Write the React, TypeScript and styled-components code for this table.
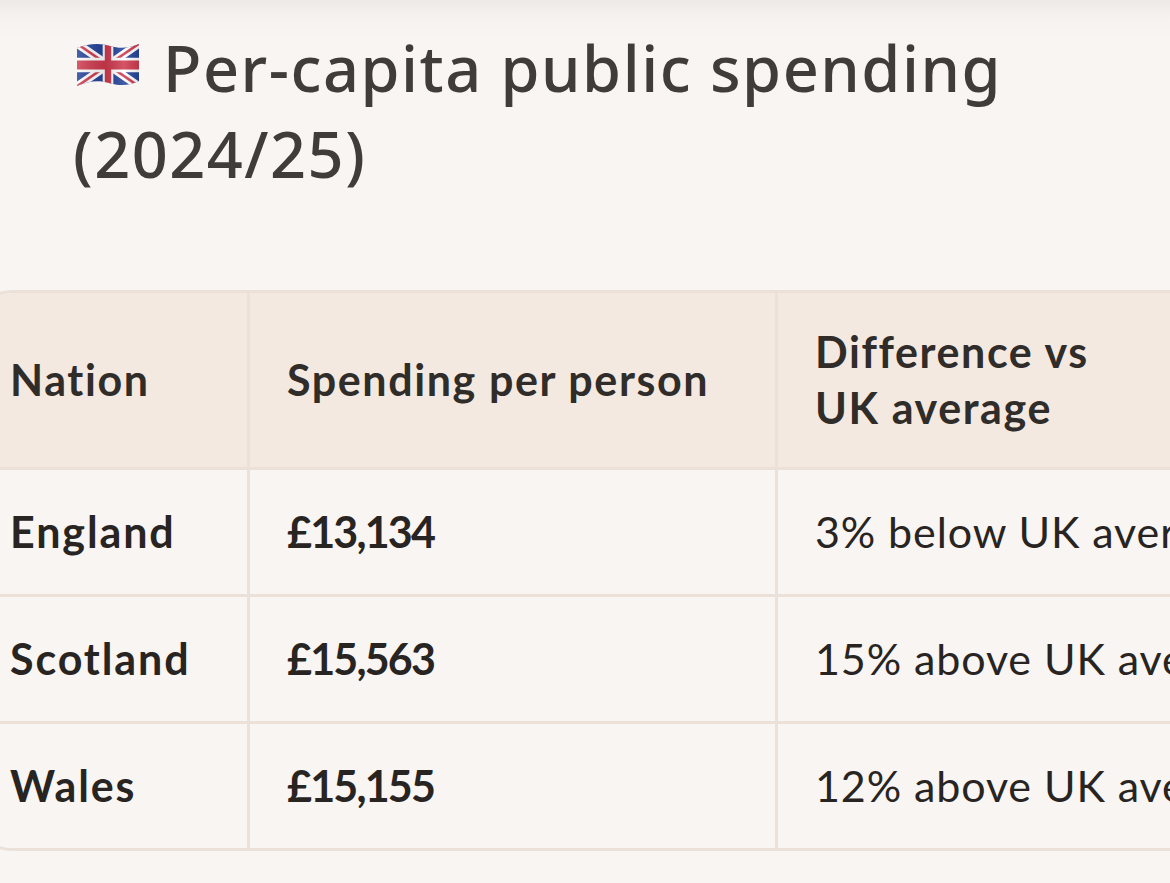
import React from 'react';
import styled, { createGlobalStyle } from 'styled-components';

const GlobalStyle = createGlobalStyle`
  html, body {
    margin: 0;
    padding: 0;
    overflow: hidden;
  }
  body {
    background: linear-gradient(#ece9e6 0px, #f5f2ef 18px, #f9f5f2 40px) no-repeat, #f9f5f2;
    font-family: "Lato", "Liberation Sans", sans-serif;
    color: #2b2725;
  }
`;

const Page = styled.main`
  padding-top: 25px;
  min-height: 883px;
  box-sizing: border-box;
`;

const Title = styled.h1`
  margin: 0 0 93px 73px;
  font-family: "Noto Sans", "Open Sans", sans-serif;
  font-weight: 500;
  font-size: 63px;
  line-height: 86px;
  color: #403c39;
  letter-spacing: 1.5px;
`;

const FlagWrap = styled.span`
  display: inline-block;
  width: 64px;
  height: 44px;
  margin-right: 23px;
  margin-left: 3px;
  vertical-align: 0;
  transform: translateY(-5px);
`;

const TableFrame = styled.div`
  display: grid;
  grid-template-columns: 275px 528px 640px;
  width: max-content;
  margin-left: -28px;
  border: 3px solid #ebe1d8;
  border-radius: 40px;
  overflow: hidden;
`;

type CellProps = {
  $head?: boolean;
  $lastCol?: boolean;
  $lastRow?: boolean;
  $bold?: boolean;
  $num?: boolean;
  $first?: boolean;
};

const Cell = styled.div<CellProps>`
  box-sizing: border-box;
  display: flex;
  align-items: center;
  padding: ${(p) => (p.$head ? '31px' : '34px')} 20px ${(p) => (p.$head ? '31px' : '34px')}
    ${(p) => (p.$first ? '35px' : '37px')};
  background: ${(p) => (p.$head ? '#f3e9e0' : '#f9f5f2')};
  border-right: ${(p) => (p.$lastCol ? 'none' : '3px solid #ebe1d8')};
  border-bottom: ${(p) => (p.$lastRow ? 'none' : '3px solid #ebe1d8')};
  font-size: 43px;
  line-height: 56px;
  font-weight: ${(p) => (p.$head || p.$bold ? 700 : 400)};
  letter-spacing: ${(p) => (p.$num ? '-1.8px' : p.$head ? '1.6px' : p.$bold ? '1.9px' : '0.9px')};
  color: ${(p) => (p.$head ? '#302c29' : '#282422')};
  white-space: ${(p) => (p.$head ? 'normal' : 'nowrap')};
`;

const Flag = () => (
  <FlagWrap>
    <svg width="64" height="44" viewBox="0 0 64 44">
      <defs>
        <clipPath id="wave">
          <path d="M1 5 C13 0 25 0 34 3 C44 6 54 5 63 1 L63 38 C53 43 43 43 33 40 C23 37 12 38 1 43 Z" />
        </clipPath>
        <linearGradient id="shade" x1="0" y1="0" x2="1" y2="0">
          <stop offset="0" stopColor="#fff" stopOpacity="0.18" />
          <stop offset="0.45" stopColor="#000" stopOpacity="0.1" />
          <stop offset="0.75" stopColor="#fff" stopOpacity="0.14" />
          <stop offset="1" stopColor="#000" stopOpacity="0.1" />
        </linearGradient>
      </defs>
      <g clipPath="url(#wave)">
        <svg x="0" y="0" width="64" height="44" viewBox="0 0 60 30" preserveAspectRatio="none">
          <rect width="60" height="30" fill="#23439a" />
          <path d="M0 0 L60 30 M60 0 L0 30" stroke="#fff" strokeWidth="6" />
          <path d="M0 0 L60 30 M60 0 L0 30" stroke="#cf3a4e" strokeWidth="2" />
          <path d="M30 0 V30 M0 15 H60" stroke="#fff" strokeWidth="10" />
          <path d="M30 0 V30 M0 15 H60" stroke="#cf3a4e" strokeWidth="6" />
        </svg>
        <rect width="64" height="44" fill="url(#shade)" />
      </g>
    </svg>
  </FlagWrap>
);

const rows = [
  { nation: 'England', spend: '£13,134', diff: '3% below UK average' },
  { nation: 'Scotland', spend: '£15,563', diff: '15% above UK average' },
  { nation: 'Wales', spend: '£15,155', diff: '12% above UK average' },
];

export default function App() {
  return (
    <>
      <GlobalStyle />
      <Page>
        <Title>
          <Flag />
          Per-capita public spending (2024/25)
        </Title>
        <TableFrame>
          <Cell $head $first>Nation</Cell>
          <Cell $head>Spending per person</Cell>
          <Cell $head $lastCol>
            Difference vs
            <br />
            UK average
          </Cell>
          {rows.map((r, i) => {
            const last = i === rows.length - 1;
            return (
              <React.Fragment key={r.nation}>
                <Cell $bold $first $lastRow={last}>{r.nation}</Cell>
                <Cell $bold $num $lastRow={last}>{r.spend}</Cell>
                <Cell $lastCol $lastRow={last}>{r.diff}</Cell>
              </React.Fragment>
            );
          })}
        </TableFrame>
      </Page>
    </>
  );
}
